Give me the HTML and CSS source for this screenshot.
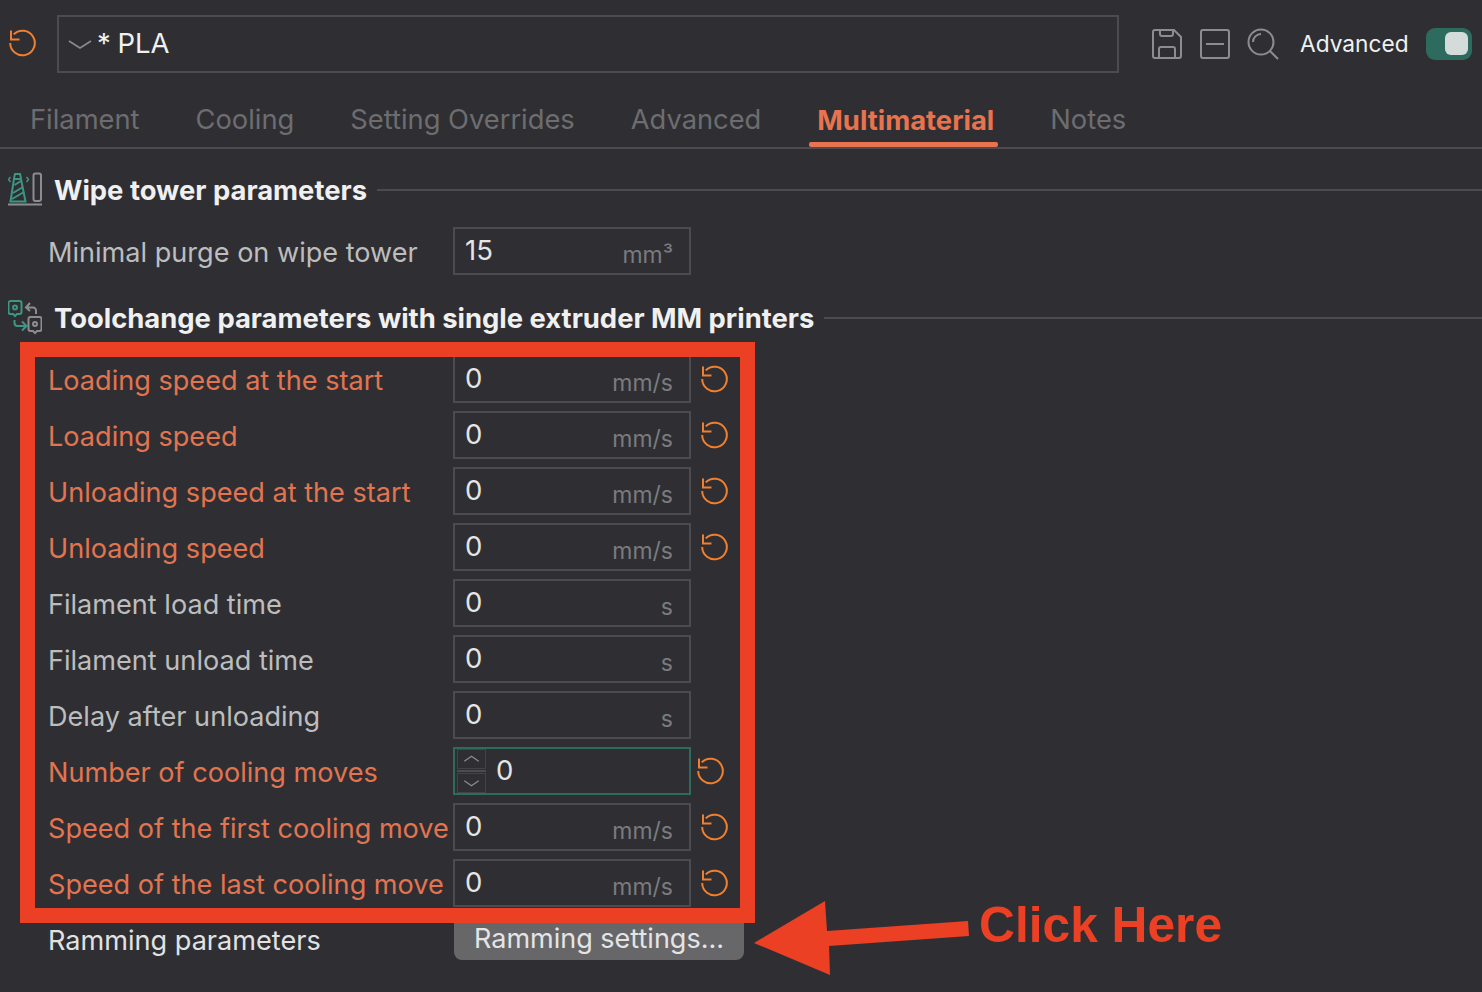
FILE: index.html
```html
<!DOCTYPE html>
<html lang="en">
<head>
  <meta charset="UTF-8">
  <title>Filament settings</title>
  <link rel="stylesheet" href="styles.css">
</head>
<body>
  <svg class="icon-defs" width="0" height="0">
    <symbol id="reset" viewBox="0 0 28 28">
      <path d="M4.700 5.400 A12.300 12.300 0 1 1 1.200 14" fill="none" stroke="currentColor" stroke-width="2"/>
      <path d="M2 1.500 V10.500 H10.500" fill="none" stroke="currentColor" stroke-width="2"/>
    </symbol>
  </svg>

  <header class="topbar">
    <svg class="reset-top"><use href="#reset"/></svg>
    <div class="preset">
      <svg class="chevron" viewBox="0 0 24 10"><path d="M1 1 L12 8 L23 1" fill="none" stroke="#8b8b8e" stroke-width="1.6"/></svg>
      <span class="preset-name">* PLA</span>
    </div>
    <div class="tools">
      <svg class="tool" viewBox="0 0 32 32" fill="none" stroke="#8d8d8f" stroke-width="2">
        <path d="M4 2 H23 L30 9 V28 A2 2 0 0 1 28 30 H4 A2 2 0 0 1 2 28 V4 A2 2 0 0 1 4 2 Z"/>
        <path d="M9 2 V6 A2 2 0 0 0 11 8 H20 A2 2 0 0 0 22 6 V2"/>
        <path d="M8 30 V21 A2 2 0 0 1 10 19 H22 A2 2 0 0 1 24 21 V30"/>
      </svg>
      <svg class="tool" viewBox="0 0 32 32" fill="none" stroke="#8d8d8f" stroke-width="2">
        <rect x="2" y="2" width="28" height="28" rx="2"/>
        <path d="M7 16 H25"/>
      </svg>
      <svg class="tool" viewBox="0 0 32 32" fill="none" stroke="#8d8d8f" stroke-width="2">
        <circle cx="14" cy="14" r="12.5"/>
        <path d="M6 14 A8 8 0 0 1 14 6"/>
        <path d="M23 23 L31 31"/>
      </svg>
      <span class="advanced">Advanced</span>
      <span class="toggle"><span class="knob"></span></span>
    </div>
  </header>

  <nav class="tabs">
    <a class="tab">Filament</a>
    <a class="tab">Cooling</a>
    <a class="tab">Setting Overrides</a>
    <a class="tab">Advanced</a>
    <a class="tab active">Multimaterial</a>
    <a class="tab">Notes</a>
  </nav>

  <section class="group">
    <div class="group-head">
      <svg class="group-icon" viewBox="0 0 34 36" fill="none" stroke-width="2">
        <path d="M2.500 29.500 L6 7 H13 L17.500 29.500 Z" stroke="#3d9584"/>
        <path d="M5 21 L15 15 M4 27 L16 20 M6.500 13 L13 9" stroke="#3d9584"/>
        <path d="M6 6 L7 2 H12 L13 6" stroke="#3d9584"/>
        <path d="M2.500 5 L0.500 7.500 L2.500 10 M18.500 5 L20.500 7.500 L18.500 10" stroke="#3d9584" stroke-width="1.500"/>
        <rect x="25.500" y="1.500" width="7.500" height="27.500" rx="2" stroke="#8d8d8f"/>
        <path d="M0 32.500 H34" stroke="#8d8d8f"/>
      </svg>
      <h2 class="group-title">Wipe tower parameters</h2>
    </div>
    <div class="row">
      <label class="label">Minimal purge on wipe tower</label>
      <div class="field"><span class="value">15</span><span class="unit">mm³</span></div>
    </div>
  </section>

  <section class="group group-second">
    <div class="group-head">
      <svg class="group-icon" viewBox="0 0 34 36" fill="none" stroke-width="2">
        <path d="M2.500 1 H11.500 A2 2 0 0 1 13.500 3 V12 A2 2 0 0 1 11.500 14 H9 L7 16 L5 14 H2.500 A2 2 0 0 1 0.500 12 V3 A2 2 0 0 1 2.500 1 Z" stroke="#3d9584"/>
        <circle cx="7" cy="7.500" r="2" stroke="#3d9584"/>
        <path d="M22 3 L18 7.500 L22 11 M18 7.500 H25 A3 3 0 0 1 28 10.500 V14" stroke="#8d8d8f"/>
        <path d="M6.500 20 V23 A3 3 0 0 0 9.500 26 H18 M14 21.500 L18.500 26 L14 30.500" stroke="#3d9584"/>
        <path d="M22.500 17 H31.500 A2 2 0 0 1 33.500 19 V29 A2 2 0 0 1 31.500 31 H29 L27 33 L25 31 H22.500 A2 2 0 0 1 20.500 29 V19 A2 2 0 0 1 22.500 17 Z" stroke="#8d8d8f"/>
        <circle cx="27" cy="24" r="2" stroke="#8d8d8f"/>
      </svg>
      <h2 class="group-title">Toolchange parameters with single extruder MM printers</h2>
    </div>

    <div class="row changed">
      <label class="label">Loading speed at the start</label>
      <div class="field"><span class="value">0</span><span class="unit">mm/s</span></div>
      <svg class="reset"><use href="#reset"/></svg>
    </div>
    <div class="row changed">
      <label class="label">Loading speed</label>
      <div class="field"><span class="value">0</span><span class="unit">mm/s</span></div>
      <svg class="reset"><use href="#reset"/></svg>
    </div>
    <div class="row changed">
      <label class="label">Unloading speed at the start</label>
      <div class="field"><span class="value">0</span><span class="unit">mm/s</span></div>
      <svg class="reset"><use href="#reset"/></svg>
    </div>
    <div class="row changed">
      <label class="label">Unloading speed</label>
      <div class="field"><span class="value">0</span><span class="unit">mm/s</span></div>
      <svg class="reset"><use href="#reset"/></svg>
    </div>
    <div class="row">
      <label class="label">Filament load time</label>
      <div class="field"><span class="value">0</span><span class="unit">s</span></div>
    </div>
    <div class="row">
      <label class="label">Filament unload time</label>
      <div class="field"><span class="value">0</span><span class="unit">s</span></div>
    </div>
    <div class="row">
      <label class="label">Delay after unloading</label>
      <div class="field"><span class="value">0</span><span class="unit">s</span></div>
    </div>
    <div class="row changed">
      <label class="label">Number of cooling moves</label>
      <div class="field spin-field">
        <div class="spinner">
          <svg class="spin-btn" viewBox="0 0 29 20"><path d="M6.500 12.500 L14.500 7 L22.500 12.500" fill="none" stroke="#8b8b8e" stroke-width="1.500"/></svg>
          <span class="spin-sep"></span>
          <svg class="spin-btn" viewBox="0 0 29 20"><path d="M6.500 7.500 L14.500 13 L22.500 7.500" fill="none" stroke="#8b8b8e" stroke-width="1.500"/></svg>
        </div>
        <span class="value">0</span>
      </div>
      <svg class="reset reset-spin"><use href="#reset"/></svg>
    </div>
    <div class="row changed">
      <label class="label">Speed of the first cooling move</label>
      <div class="field"><span class="value">0</span><span class="unit">mm/s</span></div>
      <svg class="reset"><use href="#reset"/></svg>
    </div>
    <div class="row changed">
      <label class="label">Speed of the last cooling move</label>
      <div class="field"><span class="value">0</span><span class="unit">mm/s</span></div>
      <svg class="reset"><use href="#reset"/></svg>
    </div>
    <div class="row row-button">
      <label class="label label-strong">Ramming parameters</label>
      <button class="ramming">Ramming settings...</button>
    </div>
  </section>

  <!-- annotation drawn over the screenshot -->
  <div class="callout-box"></div>
  <svg class="callout-arrow" viewBox="0 0 220 80">
    <polygon points="4,48 75,6 77,36 218,26 219,41 79,51 80,80"/>
  </svg>
  <div class="callout-text">Click Here</div>
</body>
</html>
```

FILE: styles.css
```css
* { box-sizing: border-box; margin: 0; padding: 0; }
html, body { height: 992px; overflow: hidden; }
body {
  position: relative;
  background: #2f2f33;
  font-family: Inter, "Noto Sans", sans-serif;
  color: #d0d0d0;
}
.icon-defs { position: absolute; }

.topbar {
  display: flex; align-items: center;
  height: 87px; padding: 0 10px 0 9px;
}
.reset-top { width: 28px; height: 28px; margin-top: -2px; color: #f07f2e; flex: none; }
.preset {
  display: flex; align-items: center;
  width: 1062px; height: 58px; margin-left: 20px; flex: none;
  border: 2px solid #4b4b50;
  padding-left: 9px;
}
.chevron { width: 24px; height: 10px; margin-top: 3px; }
.preset-name {
  margin-left: 5px; margin-top: -2px;
  font-size: 27.5px; color: #f0f0f0; word-spacing: -1px;
}
.tools { display: flex; align-items: center; margin-left: 32px; }
.tool { width: 32px; height: 32px; margin-right: 16px; }
.tools .tool:nth-child(3) { margin-right: 21px; }
.advanced { width: 108px; margin-top: -1px; font-size: 22.7px; color: #f0f0f0; white-space: nowrap; }
.toggle {
  display: flex; justify-content: flex-end; align-items: center;
  width: 46px; height: 32px; margin-left: 18px; padding-right: 4px;
  background: #2c6b5e; border-radius: 9px;
}
.knob { width: 23px; height: 23px; background: #d3dcda; border-radius: 6px; }

.tabs {
  display: flex; gap: 56px;
  height: 62px; padding-left: 30px;
  border-bottom: 2px solid #4b4b50;
}
.tab {
  height: 60px; line-height: 66px;
  font-size: 27.3px; color: #6d6d70;
}
.tab.active {
  position: relative;
  font-weight: 700; font-size: 27.4px; color: #e8734e;
}
.tab.active::after {
  content: ""; position: absolute;
  left: -8px; right: -4px; bottom: 0;
  height: 5px; background: #e8734e; border-radius: 2px;
}

.group { margin-top: 13px; }
.group-second { margin-top: 15px; }
.group-head {
  display: flex; align-items: center;
  height: 56px; margin-bottom: 9px; padding-left: 8px;
}
.group-icon { width: 34px; height: 36px; flex: none; }
.group-title {
  margin-left: 12px;
  font-size: 27.4px; font-weight: 700; color: #f0f0f0;
  white-space: nowrap;
}
.group-head::after {
  content: ""; flex: 1;
  height: 2px; margin-left: 10px;
  background: #4b4b50;
}

.row {
  display: flex; align-items: center;
  height: 48px; margin-bottom: 8px; padding-left: 48px;
}
.label {
  width: 405px; flex: none; margin-top: 2px;
  font-size: 27.1px; color: #bdbdbd; white-space: nowrap;
}
.changed .label { color: #e37450; }
.label-strong { color: #e2e2e2; margin-top: 5px; }
.field {
  display: flex; justify-content: space-between; align-items: center;
  width: 238px; height: 48px; padding: 0 16px 0 10px;
  border: 2px solid #4b4b50;
}
.value { font-size: 27.5px; color: #e4e4e4; margin-top: -3px; }
.unit { font-size: 23px; color: #7b7b7e; margin-top: 8px; }
.reset { width: 28px; height: 28px; margin-left: 10px; color: #f07f2e; }
.reset-spin { margin-left: 6px; }

.spin-field {
  justify-content: flex-start; padding: 0 0 0 2px;
  border-color: #2c6b5e;
}
.spinner {
  display: flex; flex-direction: column; gap: 1px;
  width: 29px; height: 44px; margin-right: 10px; flex: none;
}
.spin-btn { width: 29px; height: 20px; border: 1px solid #434347; }
.spin-sep { height: 2px; background: #4b4b50; }
.spin-field .value { margin-top: -3px; }

.row-button { height: 45px; margin-top: 1px; }
.ramming {
  width: 290px; height: 45px; margin-left: 1px; padding-top: 1px;
  background: #67676a; border: none; border-radius: 8px;
  font: 27px Inter, "Noto Sans", sans-serif; color: #e4e4e4;
}

.callout-box {
  position: absolute; left: 20px; top: 342px;
  width: 735px; height: 581px;
  border: 15px solid #eb4024;
}
.callout-arrow {
  position: absolute; left: 750px; top: 895px;
  width: 220px; height: 80px;
  fill: #eb4024;
}
.callout-text {
  position: absolute; left: 979px; top: 896px;
  font: 700 49.7px "Liberation Sans", Arial, sans-serif;
  color: #eb4024; white-space: nowrap;
}
```
